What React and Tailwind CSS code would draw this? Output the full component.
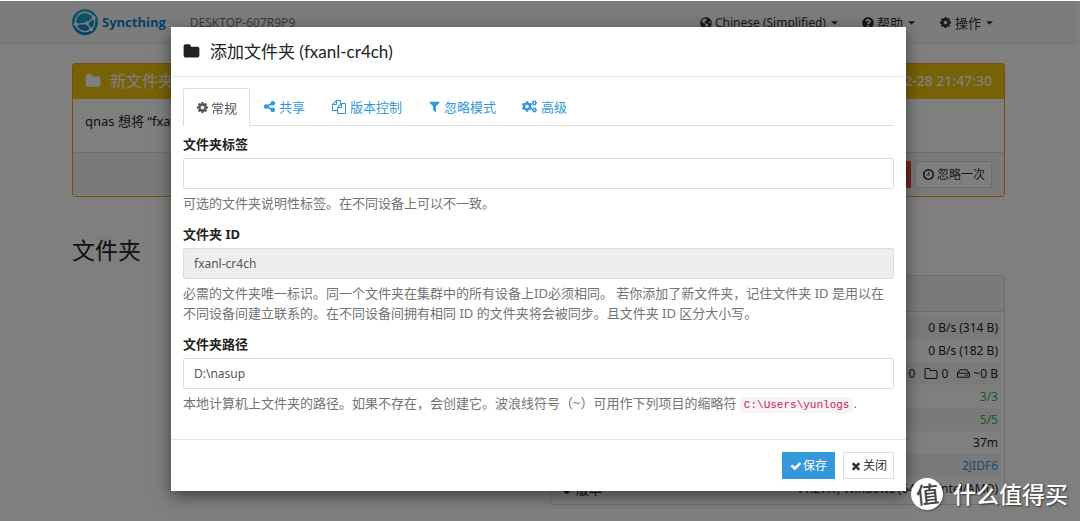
import { FaCogs, FaRegHdd, FaQuestionCircle, FaGlobeAmericas, FaTag } from "react-icons/fa";

const PATHS = {
  cog: "M1152 896q0-106-75-181t-181-75-181 75-75 181 75 181 181 75 181-75 75-181zm512-109v222q0 12-8 23t-20 13l-185 28q-19 54-39 91 35 50 107 138 10 12 10 25t-9 23q-27 37-99 108t-94 71q-12 0-26-9l-138-108q-44 23-91 38-16 136-29 186-7 28-36 28h-222q-14 0-24.5-8.5t-11.5-21.5l-28-184q-49-16-90-37l-141 107q-10 9-25 9-14 0-25-11-126-114-165-168-7-10-7-23 0-12 8-23 15-21 51-66.5t54-70.5q-27-50-41-99l-183-27q-13-2-21-12.5t-8-23.5v-222q0-12 8-23t19-13l186-28q14-46 39-92-40-57-107-138-10-12-10-24 0-10 9-23 26-36 98.5-107.5t94.5-71.5q13 0 26 10l138 107q44-23 91-38 16-136 29-186 7-28 36-28h222q14 0 24.5 8.5t11.5 21.5l28 184q49 16 90 37l142-107q9-9 24-9 13 0 25 10 129 119 165 170 7 8 7 22 0 12-8 23-15 21-51 66.5t-54 70.5q26 50 41 98l183 28q13 2 21 12.5t8 23.5z",
  folder: "M1728 608v704q0 92-66 158t-158 66h-1216q-92 0-158-66t-66-158v-960q0-92 66-158t158-66h320q92 0 158 66t66 158v32h672q92 0 158 66t66 158z",
  folderOutline: "M1600 1312v-704q0-40-28-68t-68-28h-704q-40 0-68-28t-28-68v-64q0-40-28-68t-68-28h-320q-40 0-68 28t-28 68v960q0 40 28 68t68 28h1216q40 0 68-28t28-68zm128-704v704q0 92-66 158t-158 66h-1216q-92 0-158-66t-66-158v-960q0-92 66-158t158-66h320q92 0 158 66t66 158v32h672q92 0 158 66t66 158z",
  check: "M1671 566q0 40-28 68l-724 724-136 136q-28 28-68 28t-68-28l-136-136-362-362q-28-28-28-68t28-68l136-136q28-28 68-28t68 28l294 295 656-657q28-28 68-28t68 28l136 136q28 28 28 68z",
  times: "M1490 1322q0 40-28 68l-136 136q-28 28-68 28t-68-28l-294-294-294 294q-28 28-68 28t-68-28l-136-136q-28-28-28-68t28-68l294-294-294-294q-28-28-28-68t28-68l136-136q28-28 68-28t68 28l294 294 294-294q28-28 68-28t68 28l136 136q28 28 28 68t-28 68l-294 294 294 294q28 28 28 68z",
  filter: "M1595 295q17 41-14 70l-493 493v742q0 42-39 59-13 5-25 5-27 0-45-19l-256-256q-19-19-19-45v-486l-493-493q-31-29-14-70 17-39 59-39h1280q42 0 59 39z",
  files: "M1696 384q40 0 68 28t28 68v1216q0 40-28 68t-68 28h-960q-40 0-68-28t-28-68v-288h-544q-40 0-68-28t-28-68v-672q0-40 20-88t48-76l408-408q28-28 76-48t88-20h416q40 0 68 28t28 68v328q68-40 128-40h416zm-544 213l-299 299h299v-299zm-640-384l-299 299h299v-299zm196 647l316-316v-416h-384v416q0 40-28 68t-68 28h-416v640h512v-256q0-40 20-88t48-76zm956 804v-1152h-384v416q0 40-28 68t-68 28h-416v640h896z",
  share: "M1344 1024q133 0 226.5 93.5t93.5 226.5-93.5 226.5-226.5 93.5-226.5-93.5-93.5-226.5q0-12 2-34l-360-180q-92 86-218 86-133 0-226.5-93.5t-93.5-226.5 93.5-226.5 226.5-93.5q126 0 218 86l360-180q-2-22-2-34 0-133 93.5-226.5t226.5-93.5 226.5 93.5 93.5 226.5-93.5 226.5-226.5 93.5q-126 0-218-86l-360 180q2 22 2 34t-2 34l360 180q92-86 218-86z",
  clock: "M1024 544v448q0 14-9 23t-23 9h-320q-14 0-23-9t-9-23v-64q0-14 9-23t23-9h224v-352q0-14 9-23t23-9h64q14 0 23 9t9 23zm416 352q0-148-73-273t-198-198-273-73-273 73-198 198-73 273 73 273 198 198 273 73 273-73 198-198 73-273zm224 0q0 209-103 385.5t-279.5 279.5-385.5 103-385.5-103-279.5-279.5-103-385.5 103-385.5 279.5-279.5 385.5-103 385.5 103 279.5 279.5 103 385.5z",
};

function Icon({ name, className = "size-[13px]" }) {
  return (
    <svg viewBox="0 0 1792 1792" fill="currentColor" aria-hidden="true" className={`shrink-0 ${className}`}>
      <path d={PATHS[name]} />
    </svg>
  );
}

function Caret() {
  return (
    <svg viewBox="0 0 8 4" fill="currentColor" aria-hidden="true" className="ml-[2px] h-[4px] w-[7px] shrink-0">
      <path d="M0 0h8L4 4z" />
    </svg>
  );
}

function Logo() {
  return (
    <span className="flex items-center gap-1 text-[#0882c8]">
      <svg viewBox="0 0 117.3 117.3" fill="none" aria-hidden="true" className="size-[26px]">
        <defs>
          <linearGradient id="logo" x1="0" y1="0" x2="0" y2="1">
            <stop offset="0" stopColor="#26b6db" />
            <stop offset="1" stopColor="#0882c8" />
          </linearGradient>
        </defs>
        <circle cx="58.7" cy="58.7" r="58.7" fill="url(#logo)" />
        <g stroke="#fff" strokeWidth="6">
          <circle cx="58.7" cy="58.5" r="43.7" />
          <path d="M67.5 64.4 97.6 39.4M67.5 64.4 86.5 91.8M67.5 64.4 16.7 69.2" />
        </g>
        <g fill="#fff">
          <circle cx="67.5" cy="64.4" r="9" />
          <circle cx="97.6" cy="39.3" r="9" />
          <circle cx="86.6" cy="91.8" r="9" />
          <circle cx="16.7" cy="69.2" r="9" />
        </g>
      </svg>
      <span className="font-['Open_Sans'] text-[13px] font-bold">Syncthing</span>
    </span>
  );
}

function Navbar() {
  return (
    <nav className="border-b border-[#e7e7e7] bg-[#f8f8f8]">
      <div className="mx-auto flex h-[43px] max-w-[933px] items-center text-[#333]">
        <Logo />
        <span className="ml-6 mt-[2px] text-[12px] text-[#777]">DESKTOP-607R9P9</span>
        <div className="ml-auto mt-[2px] flex items-center gap-6 pr-3">
          <button type="button" className="flex items-center gap-[3px] text-[12px] whitespace-nowrap">
            <FaGlobeAmericas className="size-3" />
            Chinese (Simplified)
            <Caret />
          </button>
          <button type="button" className="flex items-center gap-[3px]">
            <FaQuestionCircle className="size-3" />
            帮助
            <Caret />
          </button>
          <button type="button" className="flex items-center gap-[3px]">
            <Icon name="cog" />
            操作
            <Caret />
          </button>
        </div>
      </div>
    </nav>
  );
}

function Notice() {
  return (
    <section className="rounded-[3px] border border-[#f39c12] bg-white">
      <header className="flex h-[35px] items-center bg-[#f1c40f] px-3 pb-[2px] text-[16px] text-white">
        <Icon name="folder" className="size-4" />
        <h3 className="ml-[9px]">新文件夹</h3>
        <time className="ml-auto text-[14px] font-medium">2023-12-28 21:47:30</time>
      </header>
      <p className="h-[53px] px-3 pt-3">qnas 想将 “fxanl-cr4ch” 文件夹共享给您。</p>
      <footer className="flex justify-end gap-1 border-t border-[#ddd] bg-[#f5f5f5] px-3 py-2">
        <button type="button" aria-label="忽略" className="h-[27px] w-[54px] bg-[#e74c3c]" />
        <button
          type="button"
          className="flex h-[27px] items-center gap-[2px] border border-[#ddd] bg-white px-[6px] text-[12px] text-[#333]"
        >
          <Icon name="clock" className="size-[13px]" />
          忽略一次
        </button>
      </footer>
    </section>
  );
}

const ROWS = [
  { id: "down", value: "0 B/s (314 B)" },
  { id: "up", value: "0 B/s (182 B)" },
  {
    id: "state",
    value: (
      <span className="flex items-center justify-end gap-[3px]">
        0
        <Icon name="folderOutline" className="ml-[6px] size-[14px]" />
        0
        <FaRegHdd className="ml-[6px] size-[13px]" />
        ~0 B
      </span>
    ),
  },
  { id: "listeners", value: "3/3", tone: "text-[#29b74e]" },
  { id: "discovery", value: "5/5", tone: "text-[#29b74e]" },
  { id: "uptime", value: "37m" },
  { id: "id", value: <a href="#id">2JIDF6</a>, tone: "text-[#3498db]" },
  { id: "version", label: "版本", value: "v1.27.1, Windows (64-bit Intel/AMD)" },
];

function DevicePanel() {
  return (
    <section className="rounded-[3px] border border-[#ddd] bg-white">
      <header className="h-[36px] border-b border-[#ddd] bg-[#f5f5f5]" />
      <div className="p-1">
        <table className="w-full">
          <tbody>
            {ROWS.map((row) => (
              <tr key={row.id} className="h-[23px] odd:bg-[#f5f5f5]">
                <th scope="row" className="pl-[6px] text-left font-normal">
                  {row.label && (
                    <span className="flex items-center gap-1">
                      <FaTag className="size-[11px]" />
                      {row.label}
                    </span>
                  )}
                </th>
                <td className={`pr-[2px] text-right text-[12px] whitespace-nowrap ${row.tone || ""}`}>{row.value}</td>
              </tr>
            ))}
          </tbody>
        </table>
      </div>
    </section>
  );
}

const TABS = [
  { label: "共享", icon: <Icon name="share" /> },
  { label: "版本控制", icon: <Icon name="files" className="mx-px size-[14px]" /> },
  { label: "忽略模式", icon: <Icon name="filter" /> },
  { label: "高级", icon: <FaCogs className="mr-px size-[15px]" /> },
];

function Field({ id, label, children, ...input }) {
  return (
    <div>
      <label htmlFor={id} className="block leading-[19px] font-bold text-[#222]">
        {label}
      </label>
      <input
        id={id}
        type="text"
        className="mt-1 block h-[31px] w-full rounded-[2px] border border-[#ddd] bg-white px-[10px] text-[12px] text-[#555] read-only:bg-[#eee]"
        {...input}
      />
      <p className="mt-1 text-[#737373]">{children}</p>
    </div>
  );
}

function FolderDialog() {
  return (
    <div
      role="dialog"
      aria-modal="true"
      aria-labelledby="dialog-title"
      className="w-full max-w-[735px] bg-white shadow-[0_5px_15px_rgba(0,0,0,0.5)]"
    >
      <header className="flex h-[50px] items-center border-b border-[#e5e5e5] px-3 text-[#222]">
        <Icon name="folder" className="size-[17px]" />
        <h2 id="dialog-title" className="ml-[10px] font-['Lato','Noto_Sans_CJK_SC',sans-serif] text-[17px]">
          添加文件夹 (fxanl-cr4ch)
        </h2>
      </header>
      <div className="px-3 pt-[11px] pb-6">
        <div role="tablist" className="flex border-b border-[#ddd] text-[#3498db]">
          <button
            type="button"
            role="tab"
            aria-selected="true"
            className="-mb-px flex h-[38px] items-center gap-[2px] rounded-t-[2px] border border-b-0 border-[#ddd] bg-white px-3 text-[#555]"
          >
            <Icon name="cog" />
            常规
          </button>
          {TABS.map((tab) => (
            <button key={tab.label} type="button" role="tab" aria-selected="false" className="flex h-[37px] items-center gap-[3px] px-[13px]">
              {tab.icon}
              {tab.label}
            </button>
          ))}
        </div>
        <form className="mt-[9px] flex flex-col gap-3">
          <Field id="label" label="文件夹标签">
            可选的文件夹说明性标签。在不同设备上可以不一致。
          </Field>
          <Field id="folder-id" label="文件夹 ID" defaultValue="fxanl-cr4ch" readOnly>
            必需的文件夹唯一标识。同一个文件夹在集群中的所有设备上ID必须相同。 若你添加了新文件夹，记住文件夹 ID 是用以在不同设备间建立联系的。在不同设备间拥有相同 ID 的文件夹将会被同步。且文件夹 ID 区分大小写。
          </Field>
          <Field id="path" label="文件夹路径" defaultValue="D:\nasup">
            本地计算机上文件夹的路径。如果不存在，会创建它。波浪线符号（~）可用作下列项目的缩略符{" "}
            <code className="rounded-[2px] bg-[#f9f2f4] px-1 py-[2px] font-['Liberation_Mono',monospace] text-[11px] text-[#c7254e]">C:\Users\yunlogs</code>.
          </Field>
        </form>
      </div>
      <footer className="flex justify-end gap-2 border-t border-[#e5e5e5] p-3 text-[12px]">
        <button type="button" className="flex h-[27px] items-center gap-px bg-[#3498db] px-2 text-white">
          <Icon name="check" className="size-3" />
          保存
        </button>
        <button type="button" className="flex h-[27px] items-center gap-px border border-[#ddd] bg-white px-[6px] text-[#333]">
          <Icon name="times" className="size-3" />
          关闭
        </button>
      </footer>
    </div>
  );
}

function Watermark() {
  return (
    <div className="absolute right-3 bottom-[11px] flex items-center gap-[10px] text-white">
      <span className="flex size-8 items-center justify-center rounded-full bg-white text-[23px] font-medium text-[#444] shadow-[1px_1px_2px_rgba(0,0,0,0.4)]">
        <span className="-rotate-6">值</span>
      </span>
      <span className="text-[23px] font-medium [text-shadow:1px_1px_2px_rgba(0,0,0,0.6)]">什么值得买</span>
    </div>
  );
}

export default function App() {
  return (
    <div className="relative h-screen overflow-hidden bg-white font-['Noto_Sans','Noto_Sans_CJK_SC',sans-serif] text-[13px] leading-5 text-[#222]">
      <div className="pr-[3px]">
        <Navbar />
        <main className="mx-auto max-w-[933px] pt-[19px]">
          <Notice />
          <div className="mt-[35px] grid grid-cols-[1fr_455px]">
            <h2 className="text-[23px] leading-9">文件夹</h2>
            <div className="pt-[43px]">
              <DevicePanel />
            </div>
          </div>
        </main>
      </div>
      <div className="absolute inset-0 flex items-start justify-center border-t border-white bg-black/50 pt-[26px] pr-[3px]">
        <FolderDialog />
      </div>
      <Watermark />
    </div>
  );
}
